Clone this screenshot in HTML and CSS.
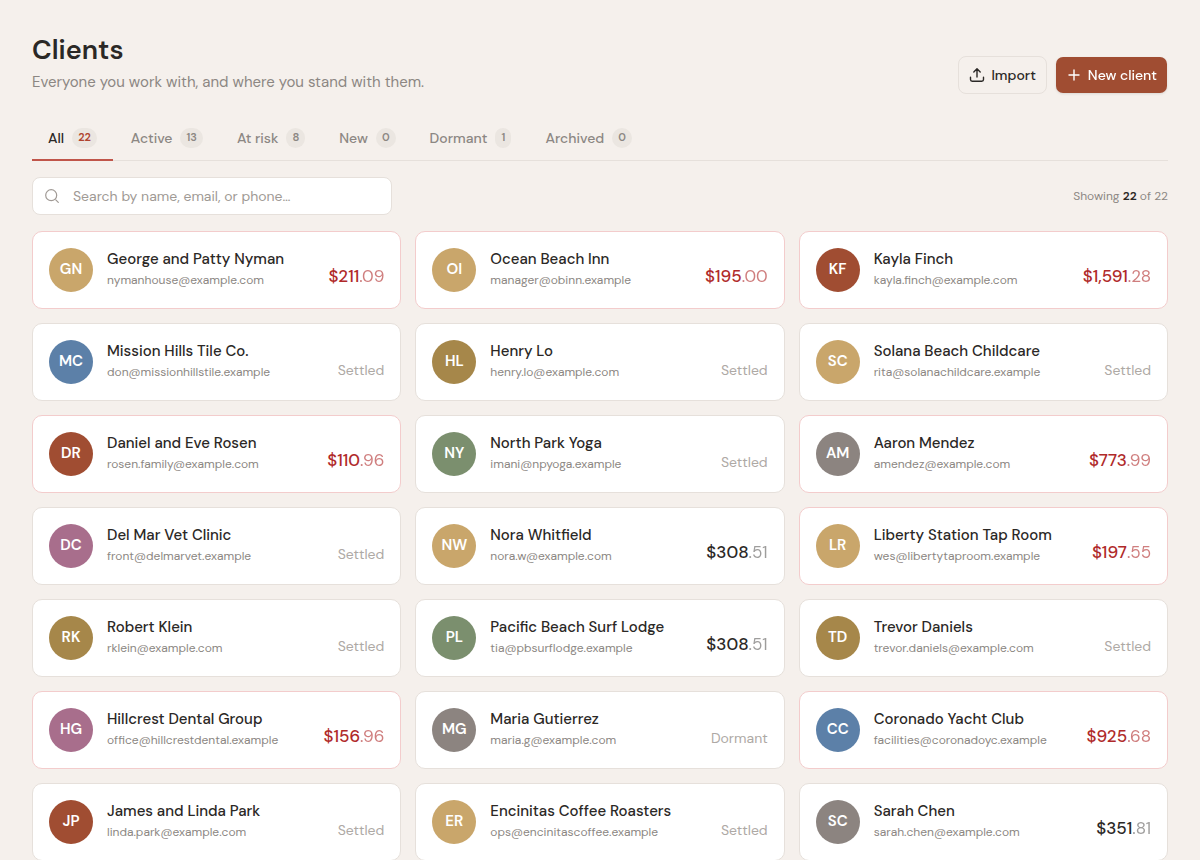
FILE: index.html
```html
<!DOCTYPE html>
<html lang="en">
<head>
  <meta charset="UTF-8">
  <meta name="viewport" content="width=device-width, initial-scale=1">
  <title>Clients</title>
  <link rel="stylesheet" href="styles.css">
</head>
<body>

  <header class="page-header">
    <div>
      <h1>Clients</h1>
      <p class="subtitle">Everyone you work with, and where you stand with them.</p>
    </div>
    <div class="actions">
      <button type="button" class="btn">
        <svg width="16" height="16" viewBox="0 0 16 16" fill="none" stroke="currentColor" stroke-width="1.4" stroke-linecap="round" stroke-linejoin="round" aria-hidden="true"><path d="M8 10V2M4.8 5 8 1.8 11.2 5M1.5 10.2v2.4a1.7 1.7 0 0 0 1.7 1.7h9.6a1.7 1.7 0 0 0 1.7-1.7v-2.4"/></svg>
        Import
      </button>
      <button type="button" class="btn btn-primary">
        <svg width="16" height="16" viewBox="0 0 16 16" fill="none" stroke="currentColor" stroke-width="1.4" stroke-linecap="round" aria-hidden="true"><path d="M8 3v10M3 8h10"/></svg>
        New client
      </button>
    </div>
  </header>

  <nav class="tabs">
    <button type="button" class="tab active">All <span class="count">22</span></button>
    <button type="button" class="tab">Active <span class="count">13</span></button>
    <button type="button" class="tab">At risk <span class="count">8</span></button>
    <button type="button" class="tab">New <span class="count">0</span></button>
    <button type="button" class="tab">Dormant <span class="count">1</span></button>
    <button type="button" class="tab">Archived <span class="count">0</span></button>
  </nav>

  <div class="toolbar">
    <label class="search">
      <svg width="14" height="14" viewBox="0 0 14 14" fill="none" stroke="currentColor" stroke-width="1.2" stroke-linecap="round" aria-hidden="true"><circle cx="6.2" cy="6.2" r="5.5"/><path d="m10.8 10.8 2.5 2.5"/></svg>
      <input type="search" aria-label="Search clients" placeholder="Search by name, email, or phone…">
    </label>
    <p class="showing">Showing <strong>22</strong> of 22</p>
  </div>

  <main class="grid" id="clients"></main>

  <script src="clients.js"></script>
</body>
</html>
```

FILE: styles.css
```css
* {
  box-sizing: border-box;
}
body {
  margin: 0;
  padding: 32px;
  background: #f5f0ec;
  color: #2b2826;
  font-family: "DM Sans", Inter, sans-serif;
  font-size: 14px;
}
h1, h2, p {
  margin: 0;
}
button, input {
  font: inherit;
  color: inherit;
}

/* header */
.page-header {
  display: flex;
  justify-content: space-between;
  align-items: flex-end;
}
h1 {
  font-size: 27px;
  font-weight: 600;
  line-height: 36px;
}
.subtitle {
  margin-top: 2px;
  font-size: 15px;
  line-height: 24px;
  color: #8c8783;
}
.actions {
  display: flex;
  gap: 8px;
}
.btn {
  display: flex;
  align-items: center;
  gap: 6px;
  height: 38px;
  padding: 0 10px;
  border: 1px solid #e6e0db;
  border-radius: 8px;
  background: transparent;
  font-weight: 500;
  cursor: pointer;
}
.btn-primary {
  border-color: transparent;
  background: #a04d32;
  background-clip: padding-box;
  color: #fff;
  filter: drop-shadow(0 1px 1px rgba(43, 40, 38, 0.12));
}

/* tabs */
.tabs {
  display: flex;
  gap: 2px;
  height: 45px;
  margin-top: 22px;
  border-bottom: 1px solid #e6e0db;
}
.tab {
  display: flex;
  align-items: center;
  gap: 8px;
  height: 45px;
  padding: 0 16px;
  border: 0;
  border-bottom: 2px solid transparent;
  background: none;
  color: #8c8783;
  font-weight: 500;
  cursor: pointer;
}
.tab.active {
  border-bottom-color: #c0554a;
  color: #2b2826;
}
.count {
  min-width: 16px;
  height: 20px;
  padding: 0 6px;
  border-radius: 10px;
  background: #ebe6e1;
  font-size: 11px;
  font-weight: 600;
  line-height: 18px;
  text-align: center;
}
.active .count {
  color: #b0432f;
}

/* search row */
.toolbar {
  display: flex;
  justify-content: space-between;
  align-items: center;
  margin: 16px 0;
}
.search {
  display: flex;
  align-items: center;
  gap: 14px;
  width: 360px;
  height: 38px;
  padding: 0 12px;
  border: 1px solid #e6e0db;
  border-radius: 8px;
  background: #fff;
  color: #a09a95;
}
.search input {
  flex: 1;
  min-width: 0;
  padding: 0;
  border: 0;
  outline: 0;
  background: none;
  color: #2b2826;
}
.search input::placeholder {
  color: #a09a95;
}
.showing {
  font-size: 12px;
  color: #8c8783;
}
.showing strong {
  font-weight: 600;
  color: #2b2826;
}

/* cards */
.grid {
  display: grid;
  grid-template-columns: repeat(3, minmax(0, 1fr));
  gap: 14px;
}
.card {
  display: flex;
  gap: 14px;
  padding: 16px;
  border: 1px solid #e6e0db;
  border-radius: 10px;
  background: #fff;
}
.card.overdue {
  border-color: #f3cccc;
}
.avatar {
  width: 44px;
  height: 44px;
  flex: none;
  border-radius: 50%;
  color: #fff;
  font-size: 15px;
  font-weight: 600;
  line-height: 42px;
  text-align: center;
}
.tan { background: #c9a66b; }
.rust { background: #a04d32; }
.blue { background: #5c80a8; }
.brown { background: #a6874a; }
.green { background: #7b8f6e; }
.gray { background: #8c8480; }
.plum { background: #a86e8c; }
.info {
  flex: 1;
  min-width: 0;
}
.name {
  font-size: 15px;
  font-weight: 500;
  line-height: 22px;
  white-space: nowrap;
}
.email {
  font-size: 12px;
  line-height: 20px;
  color: #8c8783;
}
.status, .amount {
  align-self: flex-end;
}
.status {
  line-height: 28px;
  color: #aea9a5;
}
.amount {
  font-size: 17px;
  font-weight: 500;
  line-height: 32px;
}
.cents {
  font-weight: 400;
  opacity: 0.45;
}
.overdue .amount {
  color: #b02a2a;
}
.overdue .cents {
  opacity: 0.6;
}
```

FILE: clients.js
```js
// initials, avatar colour, name, email, balance or status, overdue
const clients = [
  ['GN', 'tan', 'George and Patty Nyman', 'nymanhouse@example.com', '$211.09', true],
  ['OI', 'tan', 'Ocean Beach Inn', 'manager@obinn.example', '$195.00', true],
  ['KF', 'rust', 'Kayla Finch', 'kayla.finch@example.com', '$1,591.28', true],
  ['MC', 'blue', 'Mission Hills Tile Co.', 'don@missionhillstile.example', 'Settled'],
  ['HL', 'brown', 'Henry Lo', 'henry.lo@example.com', 'Settled'],
  ['SC', 'tan', 'Solana Beach Childcare', 'rita@solanachildcare.example', 'Settled'],
  ['DR', 'rust', 'Daniel and Eve Rosen', 'rosen.family@example.com', '$110.96', true],
  ['NY', 'green', 'North Park Yoga', 'imani@npyoga.example', 'Settled'],
  ['AM', 'gray', 'Aaron Mendez', 'amendez@example.com', '$773.99', true],
  ['DC', 'plum', 'Del Mar Vet Clinic', 'front@delmarvet.example', 'Settled'],
  ['NW', 'tan', 'Nora Whitfield', 'nora.w@example.com', '$308.51'],
  ['LR', 'tan', 'Liberty Station Tap Room', 'wes@libertytaproom.example', '$197.55', true],
  ['RK', 'brown', 'Robert Klein', 'rklein@example.com', 'Settled'],
  ['PL', 'green', 'Pacific Beach Surf Lodge', 'tia@pbsurflodge.example', '$308.51'],
  ['TD', 'brown', 'Trevor Daniels', 'trevor.daniels@example.com', 'Settled'],
  ['HG', 'plum', 'Hillcrest Dental Group', 'office@hillcrestdental.example', '$156.96', true],
  ['MG', 'gray', 'Maria Gutierrez', 'maria.g@example.com', 'Dormant'],
  ['CC', 'blue', 'Coronado Yacht Club', 'facilities@coronadoyc.example', '$925.68', true],
  ['JP', 'rust', 'James and Linda Park', 'linda.park@example.com', 'Settled'],
  ['ER', 'tan', 'Encinitas Coffee Roasters', 'ops@encinitascoffee.example', 'Settled'],
  ['SC', 'gray', 'Sarah Chen', 'sarah.chen@example.com', '$351.81']
];

document.getElementById('clients').innerHTML = clients.map(([initials, color, name, email, value, overdue]) => {
  const [whole, cents] = value.split('.');
  const side = cents
    ? `<div class="amount">${whole}<span class="cents">.${cents}</span></div>`
    : `<div class="status">${value}</div>`;
  return `
    <article class="card${overdue ? ' overdue' : ''}">
      <div class="avatar ${color}">${initials}</div>
      <div class="info">
        <h2 class="name">${name}</h2>
        <p class="email">${email}</p>
      </div>
      ${side}
    </article>`;
}).join('');
```
